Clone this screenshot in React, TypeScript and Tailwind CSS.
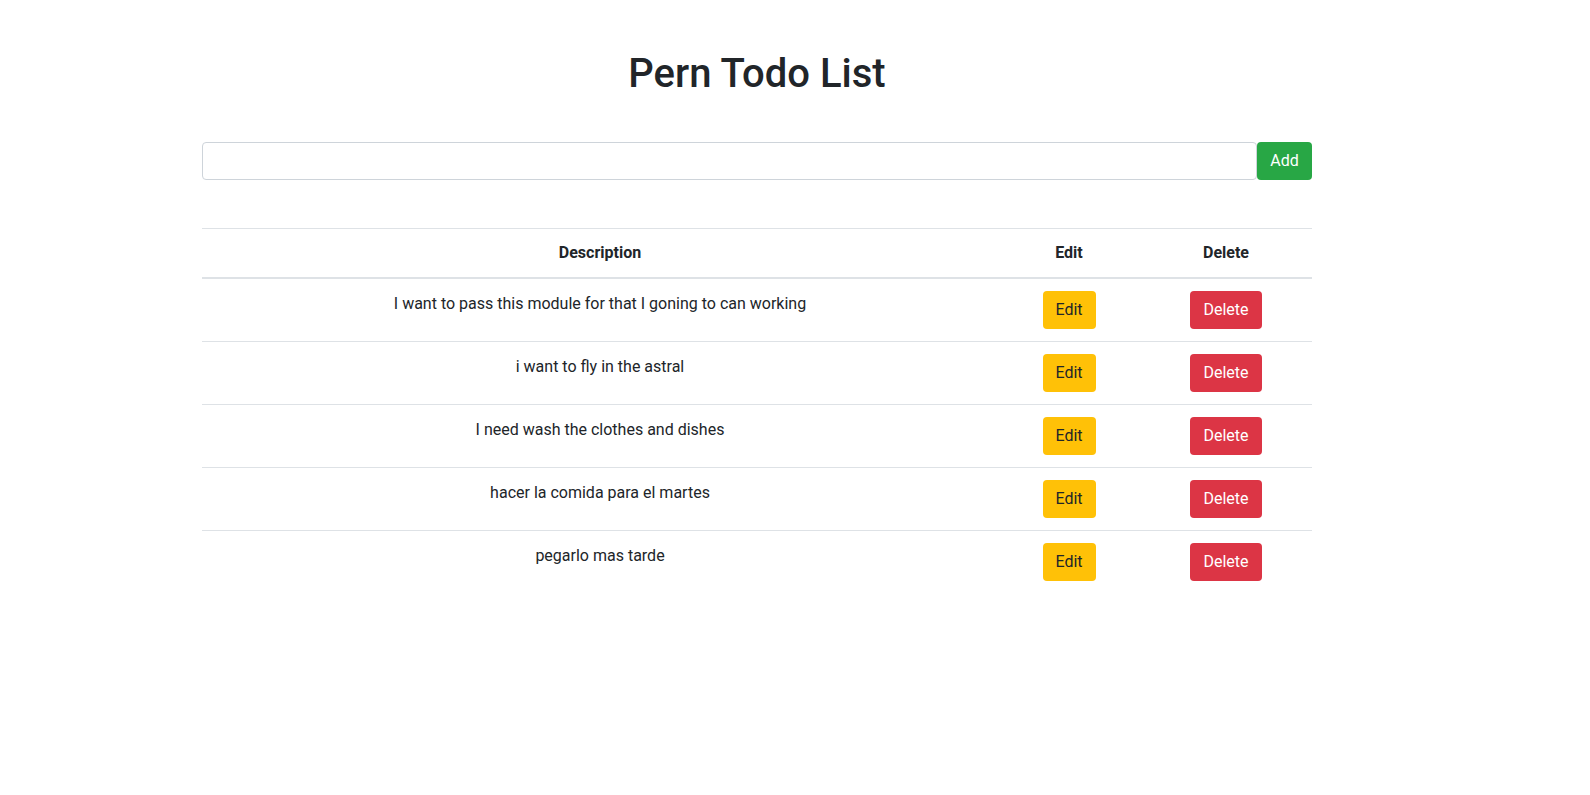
const todos = [
  "I want to pass this module for that I goning to can working",
  "i want to fly in the astral",
  "I need wash the clothes and dishes",
  "hacer la comida para el martes",
  "pegarlo mas tarde",
];

const App = () => {
  return (
    <div className="min-h-screen bg-white text-[#212529] font-['Roboto',sans-serif]">
      <div className="w-[1110px] ml-[202px]">
        <h1 className="pt-[50px] text-center text-[40px] leading-[48px] font-medium">
          Pern Todo List
        </h1>
        <form className="flex mt-[44px]" onSubmit={(e) => e.preventDefault()}>
          <input
            type="text"
            className="flex-1 h-[38px] px-3 border border-[#ced4da] rounded text-base outline-none"
          />
          <button className="w-[55px] h-[38px] bg-[#28a745] text-white rounded text-base leading-6">
            Add
          </button>
        </form>
        <table className="w-full mt-12 text-center text-base leading-6 border-collapse">
          <thead>
            <tr className="border-t border-[#dee2e6] border-b-2">
              <th className="w-[796px] p-3 font-bold">Description</th>
              <th className="w-[142px] p-3 font-bold">Edit</th>
              <th className="p-3 font-bold">Delete</th>
            </tr>
          </thead>
          <tbody>
            {todos.map((t, i) => (
              <tr key={i} className={i < todos.length - 1 ? "border-b border-[#dee2e6]" : ""}>
                <td className="px-3 pt-[13px] pb-[11px] align-top">{t}</td>
                <td className="p-3 align-top">
                  <button className="w-[53px] h-[38px] bg-[#ffc107] text-[#212529] rounded">Edit</button>
                </td>
                <td className="p-3 align-top">
                  <button className="w-[72px] h-[38px] bg-[#dc3545] text-white rounded">Delete</button>
                </td>
              </tr>
            ))}
          </tbody>
        </table>
      </div>
    </div>
  );
};

export default App;
